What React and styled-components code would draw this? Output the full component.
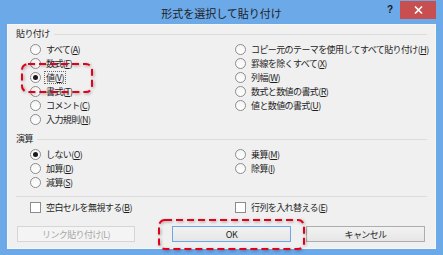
import React from 'react';
import styled, { createGlobalStyle } from 'styled-components';

const GlobalStyle = createGlobalStyle`
  html, body {
    margin: 0;
    padding: 0;
  }
  body {
    width: 443px;
    height: 255px;
    overflow: hidden;
    background: #6ba9e9;
    font-family: "Noto Sans CJK JP", "Noto Sans", sans-serif;
    color: #1e1e1e;
  }
`;

const Frame = styled.div`
  position: relative;
  width: 443px;
  height: 255px;
  box-sizing: border-box;
  background: #6ba9e9;
  padding: 0 7px 6px 7px;
  display: flex;
  flex-direction: column;
`;

const TitleBar = styled.div`
  height: 24px;
  display: grid;
  grid-template-columns: 1fr auto 1fr;
  align-items: start;
`;

const Title = styled.div`
  grid-column: 2;
  font-size: 11px;
  line-height: 26px;
  color: #222;
`;

const Controls = styled.div`
  grid-column: 3;
  justify-self: end;
  display: flex;
  align-items: flex-start;
`;

const HelpButton = styled.div`
  width: 20px;
  height: 19px;
  font-family: "Liberation Sans", Arial, sans-serif;
  font-weight: bold;
  font-size: 10px;
  line-height: 19px;
  text-align: center;
  color: #1a1a1a;
`;

const CloseButton = styled.div`
  margin-top: 1px;
  width: 36px;
  height: 18px;
  background: #c74f4f;
  display: flex;
  align-items: center;
  justify-content: center;
`;

const Client = styled.div`
  flex: 1;
  background: #f0f0f0;
  box-shadow: inset 0 0 0 1px #f7f7f7;
  padding: 0 9px;
  display: flex;
  flex-direction: column;
  font-size: 9px;
  letter-spacing: -0.6px;
`;

const GroupHeader = styled.div`
  margin-top: ${p => p.$top}px;
  height: 14px;
  display: flex;
  align-items: center;
  gap: 4px;
  line-height: 14px;
`;

const HeaderLine = styled.div`
  flex: 1;
  height: 1px;
  background: #dcdcdc;
`;

const OptionGrid = styled.div`
  margin-top: 1px;
  padding-left: 14px;
  display: grid;
  grid-template-columns: 205px 1fr;
  grid-template-rows: repeat(${p => p.$rows}, 14px);
  grid-auto-flow: column;
`;

const Option = styled.div`
  display: flex;
  align-items: center;
  gap: 3px;
  line-height: 14px;
  white-space: nowrap;
`;

const RadioMark = styled.span`
  width: 11px;
  height: 11px;
  box-sizing: border-box;
  border-radius: 50%;
  border: 1px solid #8c8c8c;
  background: linear-gradient(#f4f4f4, #ffffff);
  display: flex;
  align-items: center;
  justify-content: center;
  flex: none;

  &::after {
    content: "";
    width: 5px;
    height: 5px;
    border-radius: 50%;
    background: ${p => (p.$checked ? '#1a1a1a' : 'transparent')};
  }
`;

const CheckMark = styled.span`
  width: 11px;
  height: 11px;
  box-sizing: border-box;
  border: 1px solid #8c8c8c;
  background: #fff;
  flex: none;
`;

const OptionText = styled.span`
  padding: 0 1px;
  border: 1px dotted ${p => (p.$focused ? '#6a6a6a' : 'transparent')};
  line-height: 11px;
`;

const Separator = styled.div`
  margin-top: 7px;
  height: 1px;
  background: #dcdcdc;
`;

const CheckGrid = styled.div`
  margin-top: 3px;
  padding-left: 14px;
  display: grid;
  grid-template-columns: 205px 1fr;
  height: 14px;
`;

const ButtonRow = styled.div`
  margin-top: 12px;
  padding: 0 2px 0 1px;
  display: flex;
  gap: 15px;
`;

const Button = styled.div`
  width: ${p => p.$width}px;
  height: 16px;
  box-sizing: border-box;
  border: 1px solid ${p => (p.$disabled ? '#d6d6d6' : p.$default ? '#6ea8e4' : '#adadad')};
  background: ${p => (p.$disabled ? '#f4f4f4' : 'linear-gradient(#f2f2f2, #e6e6e6)')};
  color: ${p => (p.$disabled ? '#a6a6a6' : '#1e1e1e')};
  display: flex;
  align-items: center;
  justify-content: center;
  font-size: 9px;

  &:first-child {
    margin-right: auto;
  }
`;

const Annotation = styled.svg`
  position: absolute;
  left: ${p => p.$x}px;
  top: ${p => p.$y}px;
  overflow: visible;
  filter: drop-shadow(1px 1px 1.5px rgba(0, 0, 0, 0.35));
  pointer-events: none;
`;

const pasteOptions = [
  ['すべて', 'A'],
  ['数式', 'F'],
  ['値', 'V', true],
  ['書式', 'T'],
  ['コメント', 'C'],
  ['入力規則', 'N'],
  ['コピー元のテーマを使用してすべて貼り付け', 'H'],
  ['罫線を除くすべて', 'X'],
  ['列幅', 'W'],
  ['数式と数値の書式', 'R'],
  ['値と数値の書式', 'U'],
];

const opOptions = [
  ['しない', 'O', true],
  ['加算', 'D'],
  ['減算', 'S'],
  ['乗算', 'M'],
  ['除算', 'I'],
];

function Label({ text, hotkey, focused }) {
  return (
    <OptionText $focused={focused}>
      {text}(<u>{hotkey}</u>)
    </OptionText>
  );
}

function Radio({ text, hotkey, checked }) {
  return (
    <Option>
      <RadioMark $checked={checked} />
      <Label text={text} hotkey={hotkey} focused={checked && hotkey === 'V'} />
    </Option>
  );
}

function Check({ text, hotkey }) {
  return (
    <Option>
      <CheckMark />
      <Label text={text} hotkey={hotkey} />
    </Option>
  );
}

function DashedBox({ x, y, w, h }) {
  return (
    <Annotation $x={x} $y={y} width={w} height={h}>
      <rect x="1" y="1" width={w - 2} height={h - 2} rx="6" ry="6"
        fill="none" stroke="#e3001b" strokeWidth="2" strokeDasharray="7 4" />
    </Annotation>
  );
}

export default function App() {
  return (
    <Frame>
      <GlobalStyle />
      <TitleBar>
        <Title>形式を選択して貼り付け</Title>
        <Controls>
          <HelpButton>?</HelpButton>
          <CloseButton>
            <svg width="9" height="8" viewBox="0 0 9 8">
              <path d="M1 0.5 L8 7.5 M8 0.5 L1 7.5" stroke="#fff" strokeWidth="1.6" />
            </svg>
          </CloseButton>
        </Controls>
      </TitleBar>

      <Client>
        <GroupHeader $top={3}>
          <span>貼り付け</span>
          <HeaderLine />
        </GroupHeader>
        <OptionGrid $rows={6}>
          {pasteOptions.map(([t, k, c]) => (
            <Radio key={k} text={t} hotkey={k} checked={c} />
          ))}
        </OptionGrid>

        <GroupHeader $top={6}>
          <span>演算</span>
          <HeaderLine />
        </GroupHeader>
        <OptionGrid $rows={3}>
          {opOptions.map(([t, k, c]) => (
            <Radio key={k} text={t} hotkey={k} checked={c} />
          ))}
        </OptionGrid>

        <Separator />
        <CheckGrid>
          <Check text="空白セルを無視する" hotkey="B" />
          <Check text="行列を入れ替える" hotkey="E" />
        </CheckGrid>

        <ButtonRow>
          <Button $width={118} $disabled>リンク貼り付け(L)</Button>
          <Button $width={119} $default>OK</Button>
          <Button $width={119}>キャンセル</Button>
        </ButtonRow>
      </Client>

      <DashedBox x={21} y={63} w={72} h={30} />
      <DashedBox x={158} y={219} w={147} h={31} />
    </Frame>
  );
}
